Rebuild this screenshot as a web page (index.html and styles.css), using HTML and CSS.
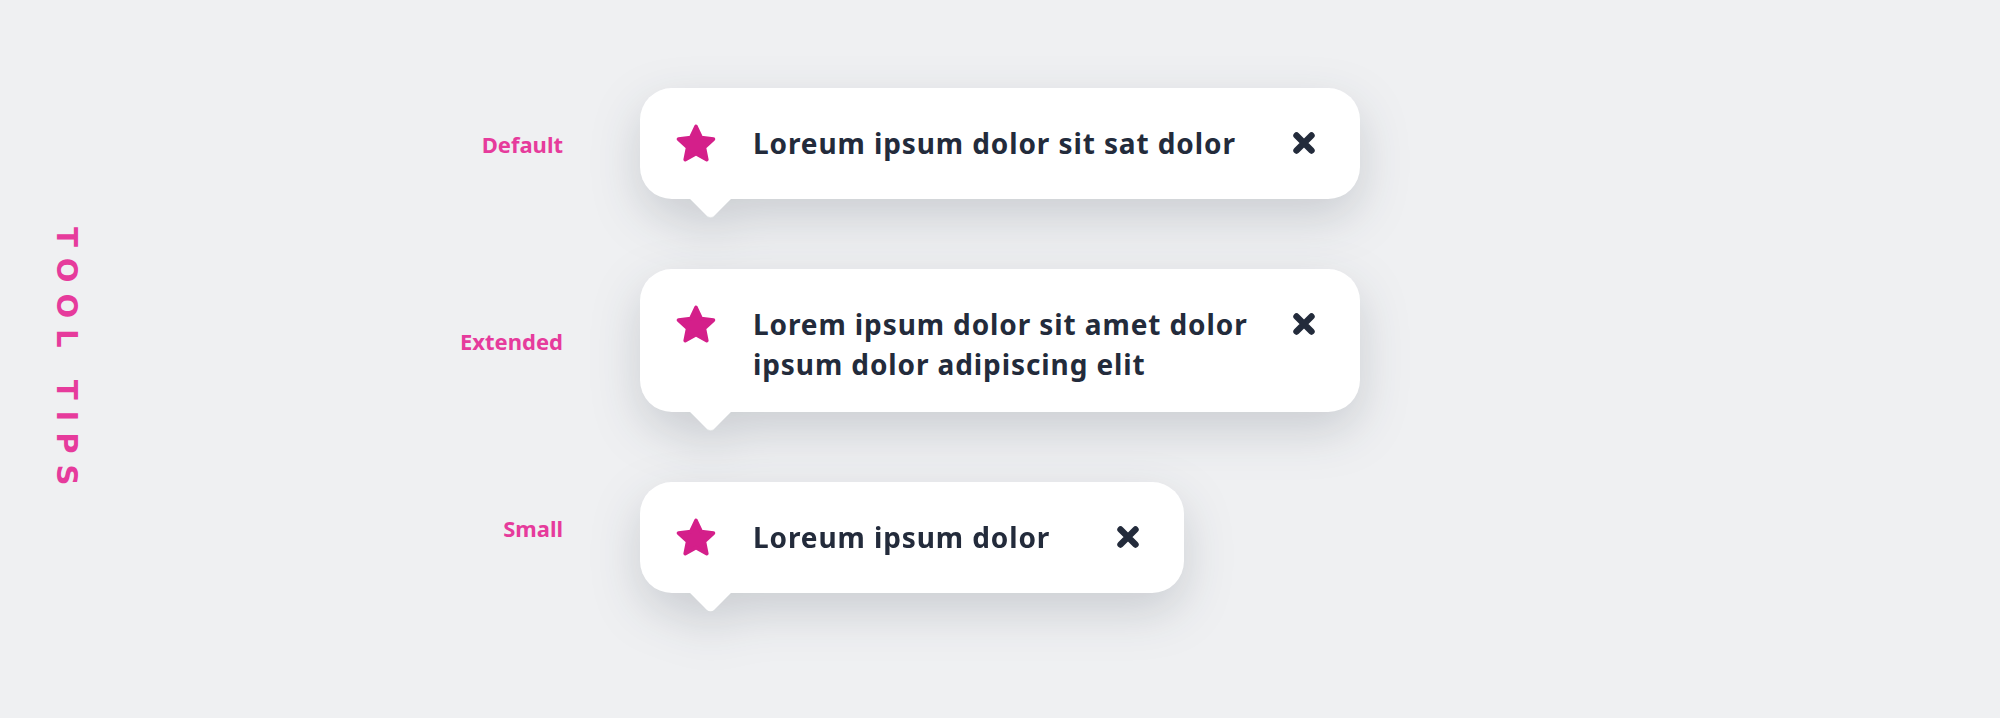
FILE: index.html
```html
<!DOCTYPE html>
<html lang="en">
<head>
<meta charset="utf-8">
<title>Tool Tips</title>
<link rel="stylesheet" href="styles.css">
</head>
<body>
<main class="page">
  <aside class="side">
    <h1 class="title">TOOL TIPS</h1>
  </aside>
  <section class="list">
    <div class="label">Default</div>
    <div class="tip tip--wide">
      <svg class="star" viewBox="0 0 24 24" aria-hidden="true"><polygon points="12,2.05 15.12,8.76 22.46,9.65 17.04,14.69 18.47,21.95 12,18.35 5.53,21.95 6.96,14.69 1.54,9.65 8.88,8.76"/></svg>
      <p class="text">Loreum ipsum dolor sit sat dolor</p>
      <svg class="close" viewBox="0 0 24 24" aria-hidden="true"><path d="M4.5 4.5 19.5 19.5M19.5 4.5 4.5 19.5"/></svg>
    </div>

    <div class="label">Extended</div>
    <div class="tip tip--wide tip--extended">
      <svg class="star" viewBox="0 0 24 24" aria-hidden="true"><polygon points="12,2.05 15.12,8.76 22.46,9.65 17.04,14.69 18.47,21.95 12,18.35 5.53,21.95 6.96,14.69 1.54,9.65 8.88,8.76"/></svg>
      <p class="text">Lorem ipsum dolor sit amet dolor ipsum dolor adipiscing elit</p>
      <svg class="close" viewBox="0 0 24 24" aria-hidden="true"><path d="M4.5 4.5 19.5 19.5M19.5 4.5 4.5 19.5"/></svg>
    </div>

    <div class="label label--small">Small</div>
    <div class="tip tip--small">
      <svg class="star" viewBox="0 0 24 24" aria-hidden="true"><polygon points="12,2.05 15.12,8.76 22.46,9.65 17.04,14.69 18.47,21.95 12,18.35 5.53,21.95 6.96,14.69 1.54,9.65 8.88,8.76"/></svg>
      <p class="text">Loreum ipsum dolor</p>
      <svg class="close" viewBox="0 0 24 24" aria-hidden="true"><path d="M4.5 4.5 19.5 19.5M19.5 4.5 4.5 19.5"/></svg>
    </div>
  </section>
</main>
</body>
</html>
```

FILE: styles.css
```css
* { box-sizing: border-box; }

html, body {
  margin: 0;
  padding: 0;
  background: #eff0f2;
}

body {
  font-family: "Noto Sans", "Open Sans", sans-serif;
  color: #232b3b;
}

.page {
  display: flex;
  width: 2000px;
  height: 718px;
}

.side {
  width: 133px;
  display: flex;
  align-items: center;
  justify-content: center;
}

.title {
  margin: 6px 0 0 0;
  writing-mode: vertical-rl;
  font-family: "DejaVu Sans", "Noto Sans", sans-serif;
  font-size: 29px;
  font-weight: 700;
  letter-spacing: 11px;
  line-height: 1;
  color: #e63b9c;
}

.list {
  padding-top: 88px;
  display: grid;
  grid-template-columns: 430px auto;
  align-content: start;
  align-items: center;
  column-gap: 77px;
  row-gap: 70px;
}

.label {
  justify-self: end;
  font-size: 22px;
  font-weight: 700;
  color: #e63b9c;
  line-height: 1;
}

.label--small {
  margin-bottom: 20px;
}

.tip {
  position: relative;
  display: flex;
  align-items: flex-start;
  background: #ffffff;
  border-radius: 32px;
  padding: 35px 44px 36px 36px;
  filter: drop-shadow(0 18px 24px rgba(25, 35, 55, 0.17));
}

.tip::after {
  content: "";
  position: absolute;
  left: 55px;
  bottom: -14px;
  width: 31px;
  height: 31px;
  background: #ffffff;
  border-radius: 0 0 5px 0;
  transform: rotate(45deg);
}

.tip--wide { width: 720px; }
.tip--small { width: 544px; }
.tip--extended { padding-bottom: 28px; }

.star {
  flex: none;
  width: 40px;
  height: 40px;
  margin-right: 37px;
  fill: #d41f8a;
  stroke: #d41f8a;
  stroke-width: 2.2;
  stroke-linejoin: round;
}

.text {
  flex: 1;
  margin: 0;
  font-size: 28px;
  font-weight: 700;
  line-height: 40px;
  letter-spacing: 0.9px;
}

.close {
  flex: none;
  width: 24px;
  height: 24px;
  margin-top: 8px;
  stroke: #232b3b;
  stroke-width: 6.4;
  stroke-linecap: round;
  fill: none;
}
```
